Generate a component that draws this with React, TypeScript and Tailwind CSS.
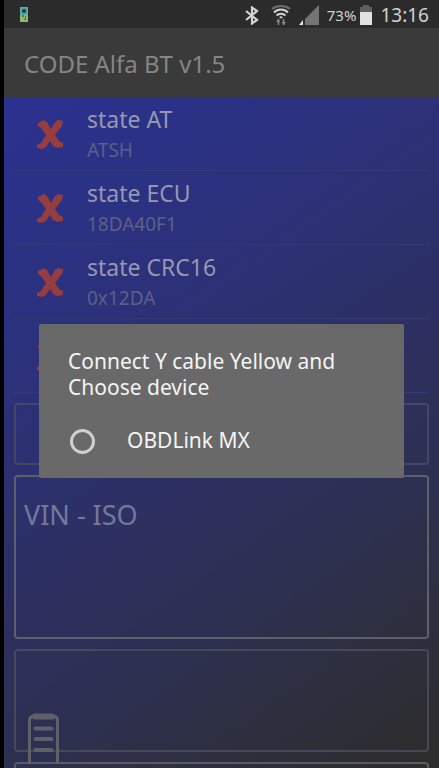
import { useState } from "react";

interface StateItem {
  title: string;
  value: string;
}

const STATES: StateItem[] = [
  { title: "state AT", value: "ATSH" },
  { title: "state ECU", value: "18DA40F1" },
  { title: "state CRC16", value: "0x12DA" },
  { title: "", value: "" },
];

const DEVICES = ["OBDLink MX"];

const CrossIcon = () => (
  <svg viewBox="0 0 28 30" className="w-7 h-[30px] shrink-0" fill="#963d40" aria-hidden="true">
    <path d="M2 4 8 1l3 2 4 7 4-7 3-2 5 1-1 5-7 9 4 6 4 2v4l-6 1-4-2-3-5-4 6-4 2-5-1v-3l4-2 5-8-5-7-3-2Z" />
  </svg>
);

const DeviceIcon = () => (
  <svg viewBox="0 0 8 15" className="w-2 h-[15px]" aria-hidden="true">
    <rect width="8" height="8" fill="#5ba7a0" />
    <rect y="8" width="8" height="7" fill="#93b86a" />
    <circle cx="4" cy="4" r="2" fill="#103f49" />
    <path d="M2 8h2v2H2zM5 9h1v4H4v-1h1z" fill="#497657" />
  </svg>
);

const BluetoothIcon = () => (
  <svg viewBox="0 0 14 19" className="w-3.5 h-[19px]" fill="none" stroke="#d2d2d2" strokeWidth="2.2" aria-hidden="true">
    <path d="m1 5 11 9-5 3.500v-16L12 5 1 14" />
  </svg>
);

const WifiIcon = () => (
  <svg viewBox="0 0 20 21" className="w-5 h-[21px]" fill="none" strokeWidth="2" aria-hidden="true">
    <path d="M1 4c5-4 13-4 18 0" stroke="#6f6f6f" />
    <path d="M3 7.500c4-4 10-4 14 0M5.500 10.500c2.500-2.500 6.500-2.500 9 0" stroke="#d2d2d2" />
    <path d="m8 12.500 2-1.500 2 1.500-2 1z" fill="#d2d2d2" />
    <path d="M7.500 20v-6M12.500 14v6" stroke="#858585" strokeWidth="1.6" />
    <path d="m5 17 2.500-3.500L9 17zM11 17h4l-2.500 3.500z" fill="#858585" />
  </svg>
);

const SignalIcon = () => (
  <svg viewBox="0 0 20 20" className="w-5 h-5" aria-hidden="true">
    <path d="M20 0v20H6v-6z" fill="#747474" />
    <path d="M4 15v5H0z" fill="#e6e6e6" />
  </svg>
);

const BatteryIcon = () => (
  <svg viewBox="0 0 12 20" className="w-3 h-5" aria-hidden="true">
    <path d="M3 0h6v2h3v5H0V2h3z" fill="#606060" />
    <path d="M0 7h12v13H0z" fill="#e2e2e2" />
  </svg>
);

const LogIcon = () => (
  <svg viewBox="0 0 34 54" className="w-[34px] h-[54px]" fill="none" stroke="#5e616a" aria-hidden="true">
    <path d="M2.500 51V7q0-3 4-4h20q4 1 4 4v44" strokeWidth="3" />
    <path d="M8 3.500h17" strokeWidth="6" strokeLinecap="round" />
    <path d="M8.500 15.500h16M8.500 26h16M8.500 37h16" strokeWidth="4" strokeLinecap="round" />
  </svg>
);

const StatusBar = () => (
  <header className="flex items-center h-7 shrink-0 bg-[#2b2b2b] text-[#d2d2d2] pl-4 pr-2.5">
    <DeviceIcon />
    <div className="flex items-center ml-auto pt-0.5">
      <BluetoothIcon />
      <div className="ml-3">
        <WifiIcon />
      </div>
      <div className="ml-2">
        <SignalIcon />
      </div>
      <span className="ml-2 text-[15px]">73%</span>
      <div className="ml-1">
        <BatteryIcon />
      </div>
      <span className="ml-2 text-[19px]">13:16</span>
    </div>
  </header>
);

const StateRow = ({ title, value }: StateItem) => (
  <li className="flex items-center h-[74px] pl-[22px] border-b border-[#343a75]">
    <CrossIcon />
    <div className="ml-[23px] pb-0.5">
      <p className="text-[23px] leading-[34px] text-[#9698b0]">{title}</p>
      <p className="text-[19px] leading-7 text-[#5c6085]">{value}</p>
    </div>
  </li>
);

const App = () => {
  const [device, setDevice] = useState("");

  return (
    <div className="h-screen overflow-hidden bg-black pl-1 font-['Noto_Sans',sans-serif]">
      <div className="flex flex-col h-full">
        <StatusBar />
        <div className="flex items-center h-[69px] shrink-0 pl-5 pt-0.5 bg-[#3a3a3a]">
          <h1 className="text-[24px] text-[#858585]">CODE Alfa BT v1.5</h1>
        </div>
        <main className="flex-1 min-h-0 overflow-hidden px-2.5 bg-[linear-gradient(145deg,#2b3190_0%,#2c317a_30%,#2d3062_52%,#2d3050_70%,#2d2f3e_84%,#2d2d2e_97%)]">
          <ul>
            {STATES.map((state, i) => (
              <StateRow key={i} {...state} />
            ))}
          </ul>
          <section className="mt-2.5 h-[62px] rounded-sm border-2 border-[#434765]" />
          <section className="mt-2.5 h-[164px] rounded-sm border-2 border-[#5c606c] px-2 pt-[18px]">
            <h2 className="text-[27px] leading-10 text-[#74789a]">VIN - ISO</h2>
          </section>
          <section className="relative mt-2.5 h-[103px] rounded-sm border-2 border-[#464957]">
            <div className="absolute left-[11px] top-[62px]">
              <LogIcon />
            </div>
          </section>
          <section className="mt-2.5 h-16 rounded-sm border-2 border-[#5a5c62]" />
        </main>
      </div>

      <div className="fixed inset-0 flex items-center pl-[39px] pr-[35px] pt-[34px]">
        <div
          role="dialog"
          aria-labelledby="dialog-title"
          className="w-full rounded-xs bg-[#696969] px-[29px] pt-6 pb-[18px] text-[#f4f4f4]"
        >
          <h2 id="dialog-title" className="text-[21px] leading-[26px]">
            Connect Y cable Yellow and Choose device
          </h2>
          <div className="mt-[22px]">
            {DEVICES.map((name) => (
              <label key={name} className="flex items-center h-[38px] gap-8 pl-0.5 text-[21px]">
                <input
                  type="radio"
                  name="device"
                  value={name}
                  checked={device === name}
                  onChange={() => setDevice(name)}
                  className="appearance-none size-[25px] rounded-full border-3 border-[#d0d0d0] checked:bg-[#d0d0d0]"
                />
                {name}
              </label>
            ))}
          </div>
        </div>
      </div>
    </div>
  );
};

export default App;
